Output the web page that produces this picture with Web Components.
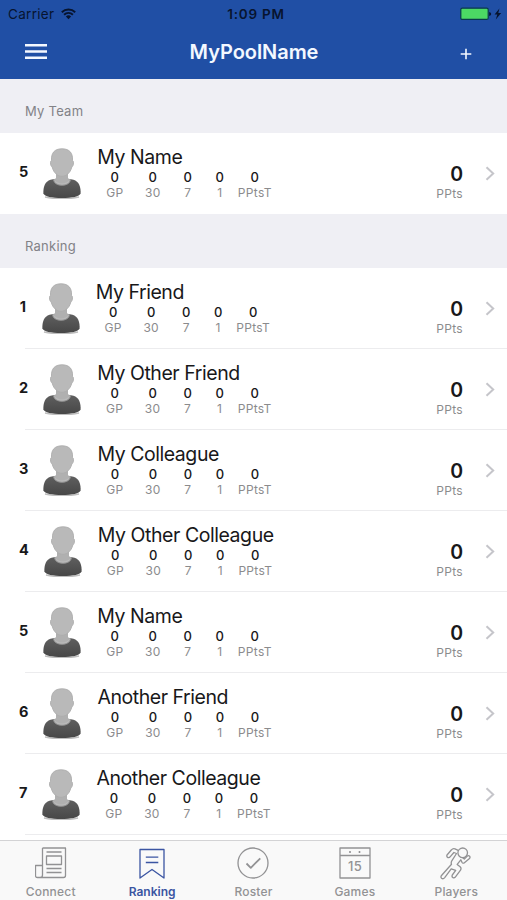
<!DOCTYPE html>
<html lang="en">
<head>
<meta charset="utf-8">
<meta name="viewport" content="width=device-width, initial-scale=1">
<title>MyPoolName</title>
<style>
    body {
        margin: 0;
        font-family: Inter, "Liberation Sans", sans-serif;
        background: #fff;
        color: #18181a;
    }
</style>
</head>
<body>
<pool-app>
    <pool-header slot="header" carrier="Carrier" time="1:09 PM">MyPoolName</pool-header>
    <pool-section>My Team</pool-section>
    <team-row rank="5" last>My Name</team-row>
    <pool-section>Ranking</pool-section>
    <team-row rank="1">My Friend</team-row>
    <team-row rank="2">My Other Friend</team-row>
    <team-row rank="3">My Colleague</team-row>
    <team-row rank="4">My Other Colleague</team-row>
    <team-row rank="5">My Name</team-row>
    <team-row rank="6">Another Friend</team-row>
    <team-row rank="7">Another Colleague</team-row>
    <tab-bar slot="tabs">
        <tab-item icon="connect">Connect</tab-item>
        <tab-item icon="ranking" active>Ranking</tab-item>
        <tab-item icon="roster">Roster</tab-item>
        <tab-item icon="games">Games</tab-item>
        <tab-item icon="players">Players</tab-item>
    </tab-bar>
</pool-app>

<script>
class PoolApp extends HTMLElement {
    connectedCallback() {
        this.attachShadow({ mode: 'open' });
        this.shadowRoot.innerHTML = `
            <style>
                :host {
                    display: flex;
                    flex-direction: column;
                    height: 900px;
                    overflow: hidden;
                }
                main {
                    flex: 1;
                    min-height: 0;
                    overflow: hidden;
                }
            </style>
            <slot name="header"></slot>
            <main><slot></slot></main>
            <slot name="tabs"></slot>
        `;
    }
}

class PoolHeader extends HTMLElement {
    connectedCallback() {
        this.attachShadow({ mode: 'open' });
        this.shadowRoot.innerHTML = `
            <style>
                :host {
                    display: block;
                    flex: none;
                    height: 79px;
                    background: #204fa5;
                }
                svg { display: block; }
                .status, .bar {
                    display: grid;
                    grid-template-columns: 1fr auto 1fr;
                    align-items: center;
                }
                .status {
                    height: 27px;
                    padding: 0 5px 0 8px;
                    font-size: 13px;
                    color: #07142f;
                }
                .left {
                    display: flex;
                    align-items: center;
                    gap: 7px;
                    font-size: 13.5px;
                    letter-spacing: 0.3px;
                }
                .time {
                    font-size: 13.5px;
                    font-weight: 600;
                    letter-spacing: 0.75px;
                    margin-left: 2px;
                }
                .battery { justify-self: end; }
                .bar {
                    height: 51px;
                    padding: 0 35px 0 25px;
                    color: #f3f8ff;
                }
                .bar > svg:first-child { margin-top: -2px; }
                .title {
                    font-size: 20px;
                    font-weight: 600;
                    letter-spacing: -0.05px;
                    margin: -1px 0 0 11px;
                }
                .add { justify-self: end; margin-top: 2px; }
            </style>
            <div class="status">
                <div class="left">
                    <span>${this.getAttribute('carrier')}</span>
                    <svg width="15" height="12" viewBox="0 0 15 12" fill="none" stroke="currentColor" stroke-width="1.9">
                        <path d="M.8 4.2a9.6 9.6 0 0 1 13.4 0M3.1 6.7a6.3 6.3 0 0 1 8.8 0"/>
                        <path d="M7.5 11.2 4.9 8.6a3.7 3.7 0 0 1 5.2 0z" fill="currentColor" stroke="none"/>
                    </svg>
                </div>
                <span class="time">${this.getAttribute('time')}</span>
                <svg class="battery" width="42" height="14" viewBox="0 0 42 14">
                    <rect x=".8" y="1.2" width="27.4" height="11.2" rx="1.5" fill="#4cd964" stroke="#093a4b" stroke-width="1.2"/>
                    <path d="M29.2 5q2 .4 2 2t-2 2z" fill="#07142f"/>
                    <path d="M39.4 1.5 34.6 7.6h2.7l-1.5 5 5.4-6.7h-2.9z" fill="#07142f"/>
                </svg>
            </div>
            <div class="bar">
                <svg width="22" height="17" viewBox="0 0 22 17" fill="currentColor">
                    <path d="M0 1h22v2.5H0zM0 7.2h22v2.5H0zM0 13.4h22v2.5H0z"/>
                </svg>
                <span class="title"><slot></slot></span>
                <svg class="add" width="12" height="12" viewBox="0 0 12 12" stroke="currentColor" stroke-width="1.6">
                    <path d="M6 .7v10.6M.7 6h10.6"/>
                </svg>
            </div>
        `;
    }
}

class PoolSection extends HTMLElement {
    connectedCallback() {
        this.attachShadow({ mode: 'open' });
        this.shadowRoot.innerHTML = `
            <style>
                :host {
                    display: flex;
                    align-items: center;
                    box-sizing: border-box;
                    height: 54px;
                    padding: 9px 0 0 25px;
                    background: #efeff4;
                    color: #828287;
                    font-size: 13px;
                    letter-spacing: 0.25px;
                }
            </style>
            <slot></slot>
        `;
    }
}

class PlayerAvatar extends HTMLElement {
    connectedCallback() {
        this.attachShadow({ mode: 'open' });
        this.shadowRoot.innerHTML = `
            <style>
                :host { display: block; width: 38px; height: 51px; }
                svg { display: block; }
            </style>
            <svg width="38" height="51" viewBox="0 0 38 51">
                <defs>
                    <linearGradient id="shirt" x1="0" y1="0" x2="0" y2="1">
                        <stop offset="0" stop-color="#606060"/>
                        <stop offset="1" stop-color="#474747"/>
                    </linearGradient>
                </defs>
                <path d="M2 49q17 3.500 34 0" fill="none" stroke="#bdbdbd" stroke-width="1.5"/>
                <path d="M.4 45.500C.1 39 2 33.500 7.500 31.800 11 30.800 14 30.500 19 30.500s8 .3 11.500 1.300C36 33.500 37.900 39 37.600 45.500 36.500 48.500 29 50 19 50S1.500 48.500.4 45.500z" fill="url(#shirt)"/>
                <path d="M10.500 31.300c0 8 17 8 17 0" fill="#bababa" stroke="#909090" stroke-width="1"/>
                <path d="M13 22v8q-.2 1.500-1.800 1.700c3.500 5 12.100 5 15.600 0Q25.200 31.500 25 30v-8z" fill="#b0b0b0"/>
                <path d="M8.500 12.500C8 5 11.500.8 19 .8S30 5 29.500 12.500c1.400 0 1.400 5.500-.7 6.500C27.500 25 23 28.300 19 28.300S10.500 25 9.200 19c-2.100-1-2.100-6.500-.7-6.500z" fill="#b9b9b9" stroke="#adadad" stroke-width=".9"/>
            </svg>
        `;
    }
}

class TeamRow extends HTMLElement {
    connectedCallback() {
        const labels = ['GP', '30', '7', '1', 'PPtsT'];
        this.attachShadow({ mode: 'open' });
        this.shadowRoot.innerHTML = `
            <style>
                :host {
                    display: flex;
                    align-items: flex-start;
                    box-sizing: border-box;
                    height: 81px;
                    padding: 0 12px 0 19px;
                    background: linear-gradient(#ececee, #ececee) 25px 100% / 100% 1px no-repeat #fff;
                }
                :host([last]) { background: #fff; }
                .rank {
                    min-width: 7.7px;
                    font-size: 14.5px;
                    line-height: 18px;
                    font-weight: 700;
                    text-align: center;
                    margin: 30px 15px 0 0;
                }
                player-avatar { margin: 15px 16.5px 0 0; }
                .info { padding-top: 13px; }
                .name {
                    font-size: 19.5px;
                    line-height: 23px;
                    letter-spacing: -0.45px;
                    white-space: nowrap;
                    margin-left: -0.5px;
                }
                .stats {
                    display: grid;
                    grid-template-columns: 34px 42px 28px 36px 34px;
                    text-align: center;
                }
                .stat b {
                    display: block;
                    font-size: 13px;
                    line-height: 16px;
                    font-weight: 500;
                }
                .stat span, .points span {
                    display: block;
                    font-size: 12px;
                    line-height: 15px;
                    color: #8b8b8d;
                    letter-spacing: 0.3px;
                }
                .points {
                    margin-left: auto;
                    padding-top: 29px;
                    text-align: right;
                }
                .points b {
                    display: block;
                    font-size: 19.5px;
                    line-height: 24px;
                    font-weight: 600;
                }
                .chevron { margin: 33px 0 0 22px; }
            </style>
            <span class="rank">${this.getAttribute('rank')}</span>
            <player-avatar></player-avatar>
            <div class="info">
                <div class="name"><slot></slot></div>
                <div class="stats">
                    ${labels.map(label => `<div class="stat"><b>0</b><span>${label}</span></div>`).join('')}
                </div>
            </div>
            <div class="points"><b>0</b><span>PPts</span></div>
            <svg class="chevron" width="10" height="15" viewBox="0 0 10 15" fill="none" stroke="#c5c5ca" stroke-width="2">
                <path d="m1.500 1.200 6.700 6.300-6.700 6.300"/>
            </svg>
        `;
    }
}

class TabBar extends HTMLElement {
    connectedCallback() {
        this.attachShadow({ mode: 'open' });
        this.shadowRoot.innerHTML = `
            <style>
                :host {
                    display: grid;
                    grid-template-columns: repeat(5, 1fr);
                    flex: none;
                    box-sizing: border-box;
                    height: 60px;
                    border-top: 1px solid #d3d3d5;
                    background: #f9f9f9;
                }
            </style>
            <slot></slot>
        `;
    }
}

const ICONS = {
    connect: `
        <path d="M7.500 1h23v27.500q0 2-2 2h-26q-2 0-2-2V18.500h7M7.500 1v27q0 2.500-2.500 2.500"/>
        <path d="M11.500 5h15M11.500 21.500h15M11.500 25.500h15M11.500 9h15v8.500h-15z"/>`,
    ranking: `
        <path d="M4 2.500h24v28.500L16 22.500 4 31z"/>
        <path d="M9.800 10.200h12.500M9.800 15.500h12.500"/>`,
    roster: `
        <circle cx="16" cy="16" r="15"/>
        <path d="m9.500 16.500 4.300 4.300 9.500-9.500" stroke-width="1.8"/>`,
    games: `
        <path d="M1 1h30v30H1zM1 8.500h30"/>
        <path d="M11 4v2M20.500 4v2" stroke-width="1.6"/>
        <text x="16" y="24" text-anchor="middle" font-size="13" font-weight="500" fill="currentColor" stroke="none">15</text>`,
    players: `
        <circle cx="22.700" cy="5.800" r="4.800"/>
        <path d="M18.200 3.300 15 1.800Q12.800 1 11.500 2.800L7 8q-.7 1.900.9 2.600 1.400.4 2.400-.9l3.600-4.200 2.600 1-4.700 7.300q-1 1.800-.3 3.500L1.300 28.800q-.9 1.700.5 2.700 1.600.7 2.900-.9l6.500-8.800 4.500 1.600-3.400 4.600q-.8 1.800.7 2.700 1.500.5 2.500-.9l5-6.600q1.200-2-.4-3.400l-2.900-2.400 3.600-4.600 1.200 2.500q1 1.400 2.400.4l5.100-4.200q1-1.200.1-2.300-1-1.100-2.300-.1l-3 3-1.800-1.600"/>`
};

class TabItem extends HTMLElement {
    connectedCallback() {
        this.attachShadow({ mode: 'open' });
        this.shadowRoot.innerHTML = `
            <style>
                :host {
                    display: flex;
                    flex-direction: column;
                    align-items: center;
                    padding-top: 6px;
                    color: #929294;
                    font-size: 12px;
                    line-height: 16px;
                    font-weight: 500;
                    letter-spacing: 0.2px;
                }
                :host([active]) { color: #3b55a2; font-weight: 600; letter-spacing: 0; }
                svg { display: block; margin-bottom: 4px; }
            </style>
            <svg width="32" height="33" viewBox="0 0 32 33" fill="none" stroke="currentColor" stroke-width="1.3" stroke-linejoin="round">
                ${ICONS[this.getAttribute('icon')]}
            </svg>
            <span><slot></slot></span>
        `;
    }
}

customElements.define('pool-app', PoolApp);
customElements.define('pool-header', PoolHeader);
customElements.define('pool-section', PoolSection);
customElements.define('player-avatar', PlayerAvatar);
customElements.define('team-row', TeamRow);
customElements.define('tab-bar', TabBar);
customElements.define('tab-item', TabItem);
</script>
</body>
</html>
